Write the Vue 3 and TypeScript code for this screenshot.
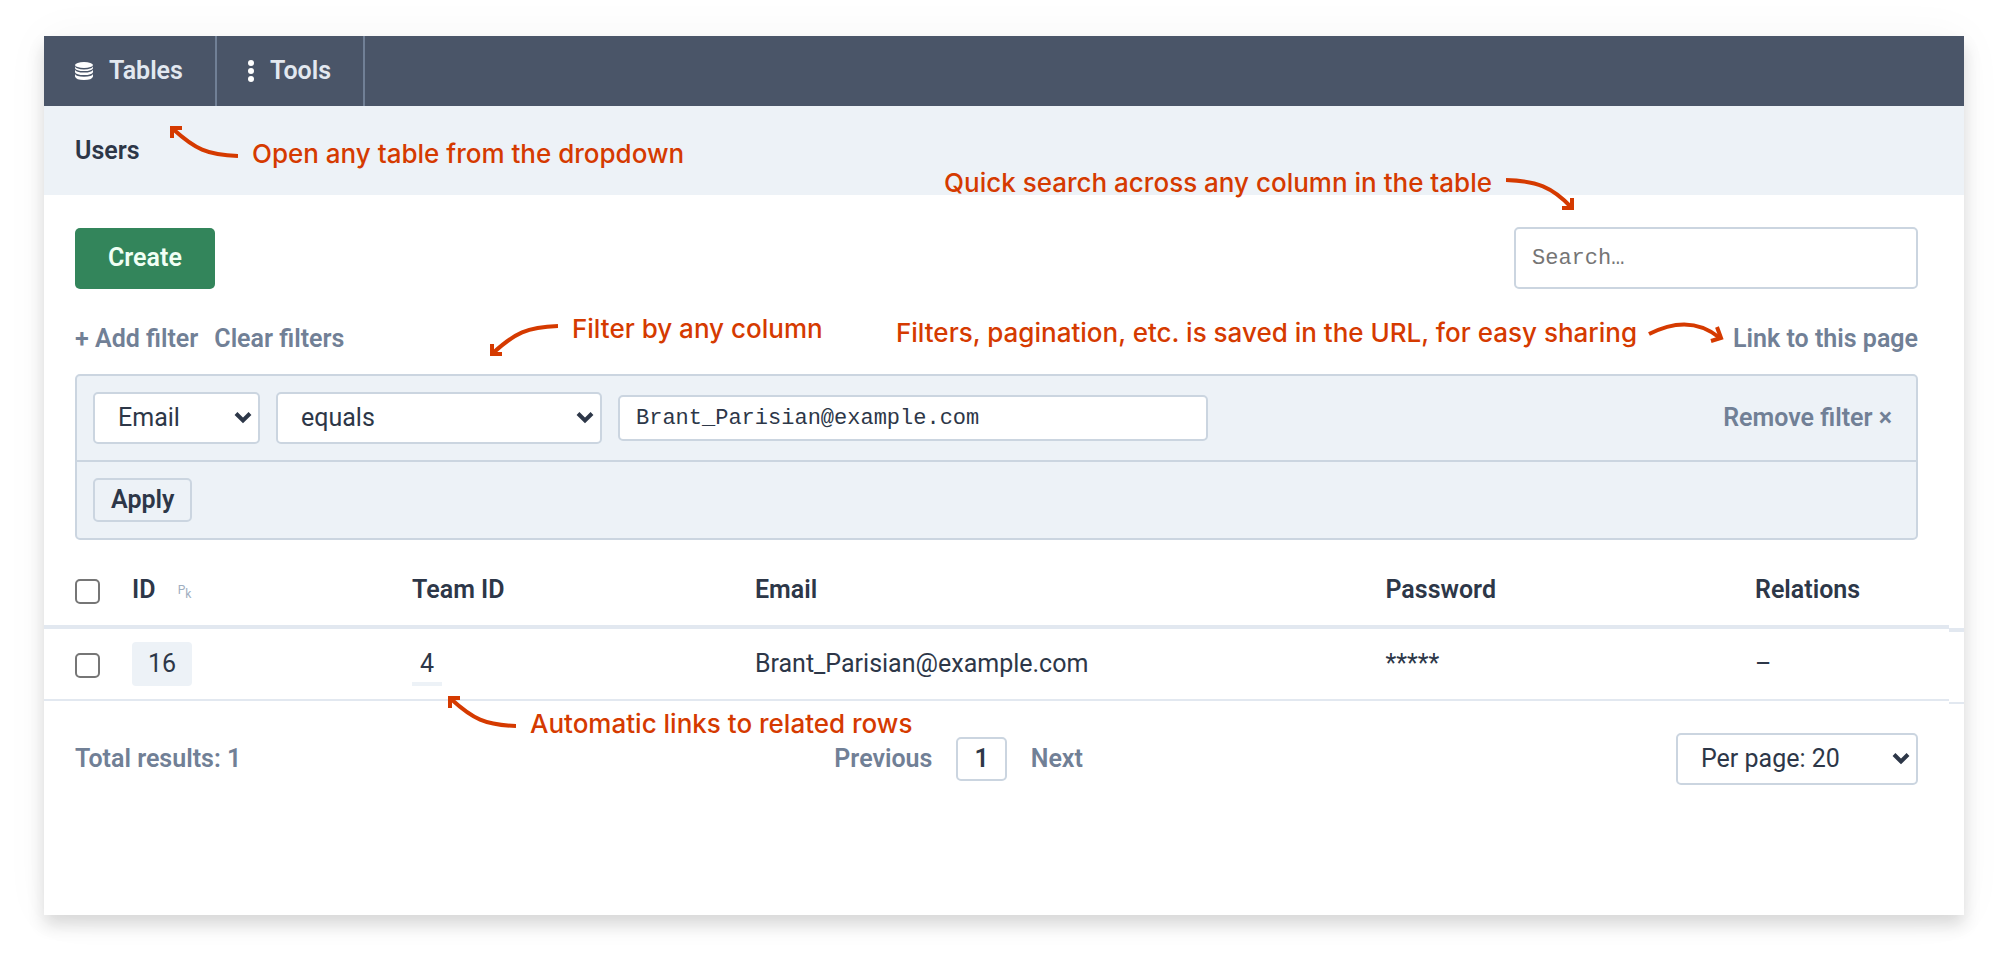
<script setup lang="ts">
import { ref } from 'vue'

interface UserRow {
  id: number
  teamId: number
  email: string
  password: string
  relations: string
}

const column = ref('Email')
const operator = ref('equals')
const filterValue = ref('Brant_Parisian@example.com')
const search = ref('')
const perPage = ref('20')
const rows: UserRow[] = [
  { id: 16, teamId: 4, email: 'Brant_Parisian@example.com', password: '*****', relations: '–' },
]
</script>

<template>
  <main class="card">
    <nav class="menu">
      <button class="menu-item" type="button">
        <svg class="db" viewBox="0 0 18 18" aria-hidden="true">
          <ellipse cx="9" cy="3" rx="9" ry="3" />
          <path d="M0 4.600Q1 7.400 9 7.400T18 4.600V6.200Q17 9 9 9T0 6.200Z" />
          <path d="M0 7.800Q1 10.600 9 10.600T18 7.800V10.200Q17 13 9 13T0 10.200Z" />
          <path d="M0 12Q1 14.700 9 14.700T18 12V14.500Q17 18 9 18T0 14.500Z" />
        </svg>
        Tables
      </button>
      <button class="menu-item" type="button">
        <svg class="dots" viewBox="0 0 6 22" aria-hidden="true">
          <circle cx="3" cy="3" r="3" />
          <circle cx="3" cy="11" r="3" />
          <circle cx="3" cy="19" r="3" />
        </svg>
        Tools
      </button>
    </nav>

    <header class="title"><h1>Users</h1></header>

    <section class="content">
      <div class="bar">
        <button class="create" type="button">Create</button>
        <input v-model="search" class="field search" type="text" placeholder="Search…" aria-label="Search" />
      </div>

      <div class="bar links">
        <div class="link-group">
          <a href="#add">+ Add filter</a>
          <a href="#clear">Clear filters</a>
        </div>
        <a href="#link">Link to this page</a>
      </div>

      <form class="filters" @submit.prevent>
        <div class="filter-row">
          <span class="select column">
            <select v-model="column" aria-label="Column">
              <option>Email</option>
              <option>ID</option>
              <option>Team ID</option>
            </select>
            <svg viewBox="0 0 18 13" aria-hidden="true"><path d="M2 2.500L9 9.500L16 2.500" /></svg>
          </span>
          <span class="select operator">
            <select v-model="operator" aria-label="Operator">
              <option>equals</option>
              <option>contains</option>
            </select>
            <svg viewBox="0 0 18 13" aria-hidden="true"><path d="M2 2.500L9 9.500L16 2.500" /></svg>
          </span>
          <input v-model="filterValue" class="field value" type="text" aria-label="Filter value" />
          <a class="remove" href="#remove">Remove filter ×</a>
        </div>
        <div class="filter-row">
          <button class="apply" type="submit">Apply</button>
        </div>
      </form>
    </section>

    <section class="listing">
      <table>
        <colgroup>
          <col class="c-check" /><col class="c-id" /><col class="c-team" />
          <col class="c-email" /><col class="c-pass" /><col />
        </colgroup>
        <thead>
          <tr>
            <th class="check"><input type="checkbox" aria-label="Select all rows" /></th>
            <th>ID <span class="pk"><span class="pk-p">P</span>k</span></th>
            <th>Team ID</th>
            <th>Email</th>
            <th>Password</th>
            <th>Relations</th>
          </tr>
        </thead>
        <tbody>
          <tr v-for="row in rows" :key="row.id">
            <td class="check"><input type="checkbox" :aria-label="`Select row ${row.id}`" /></td>
            <td><a class="id" href="#row">{{ row.id }}</a></td>
            <td><a class="team" href="#team">{{ row.teamId }}</a></td>
            <td>{{ row.email }}</td>
            <td>{{ row.password }}</td>
            <td>{{ row.relations }}</td>
          </tr>
        </tbody>
      </table>
    </section>

    <footer class="footer">
      <span>Total results: 1</span>
      <div class="pages">
        <a href="#previous">Previous</a>
        <a class="current" href="#1">1</a>
        <a href="#next">Next</a>
      </div>
      <span class="select per-page">
        <select v-model="perPage" aria-label="Results per page">
          <option value="20">Per page: 20</option>
          <option value="50">Per page: 50</option>
        </select>
        <svg viewBox="0 0 18 13" aria-hidden="true"><path d="M2 2.500L9 9.500L16 2.500" /></svg>
      </span>
    </footer>

    <p class="note low open">
      <svg class="hook" viewBox="0 0 68 34" aria-hidden="true">
        <path d="M68 30C37 29 25 23 3 3" /><path d="M2 12V2H12" />
      </svg>
      Open any table from the dropdown
    </p>
    <p class="note quick">
      Quick search across any column in the table
      <svg class="hook" viewBox="0 0 68 34" aria-hidden="true">
        <path d="M0 3C31 4 46 10 65 30" /><path d="M66 21V31H56" />
      </svg>
    </p>
    <p class="note any">
      <svg class="hook" viewBox="0 0 68 34" aria-hidden="true">
        <path d="M68 3C37 4 25 10 3 30" /><path d="M2 21V31H12" />
      </svg>
      Filter by any column
    </p>
    <p class="note share">
      Filters, pagination, etc. is saved in the URL, for easy sharing
      <svg class="wave" viewBox="0 0 76 22" aria-hidden="true">
        <path d="M1 12Q42 -9 72 16" /><path d="M69 5L73 16L63 19" />
      </svg>
    </p>
    <p class="note low related">
      <svg class="hook" viewBox="0 0 68 34" aria-hidden="true">
        <path d="M68 30C37 29 25 23 3 3" /><path d="M2 12V2H12" />
      </svg>
      Automatic links to related rows
    </p>
  </main>
</template>

<style>
body {
  margin: 0;
  background: #fff;
}
</style>

<style scoped>
*, *::after {
  box-sizing: border-box;
}
.card {
  position: relative;
  margin: 36px 44px 54px;
  padding-bottom: 130px;
  background: #fff;
  box-shadow: 0 0 44px rgba(0, 0, 0, 0.04), 0 10px 16px rgba(0, 0, 0, 0.14);
  color: #2d3748;
  font: 400 25px/32px Roboto, sans-serif;
}
button, select {
  font: inherit;
  color: inherit;
}
a {
  color: inherit;
  text-decoration: none;
}
.menu {
  display: flex;
  height: 70px;
  background: #4a5568;
}
.menu-item {
  display: flex;
  align-items: center;
  padding: 0 32px 0 31px;
  border: 0;
  border-right: 2px solid #718096;
  background: none;
  color: #e2e8f0;
  font-weight: 600;
}
.menu-item svg {
  fill: #fff;
}
.db {
  width: 18px;
  height: 18px;
  margin-right: 16px;
}
.dots {
  width: 6px;
  height: 22px;
  margin-right: 16px;
}
.title {
  display: flex;
  align-items: center;
  height: 89px;
  padding: 0 31px;
  background: #edf2f7;
}
h1 {
  margin: 0;
  font: inherit;
  font-weight: 600;
}
.content {
  padding: 32px 46px 0 31px;
}
.bar {
  display: flex;
  align-items: center;
  justify-content: space-between;
}
.create {
  height: 61px;
  padding: 0 33px;
  border: 0;
  border-radius: 5px;
  background: #33855b;
  color: #f0fff4;
  font-weight: 600;
}
.field {
  height: 46px;
  padding: 0 16px;
  border: 2px solid #cbd5e0;
  border-radius: 5px;
  background: #fff;
  color: #2d3748;
  font: 400 22px "Liberation Mono", monospace;
}
.field::placeholder {
  color: #757575;
}
.search {
  width: 404px;
  height: 62px;
}
.links {
  margin: 34px 0 19px;
  color: #718096;
  font-weight: 600;
}
.link-group {
  display: flex;
  gap: 16px;
}
.filters {
  border: 2px solid #cbd5e0;
  border-radius: 5px;
  background: #edf2f7;
}
.filter-row {
  display: flex;
  align-items: center;
  gap: 16px;
  padding: 16px;
}
.filter-row + .filter-row {
  border-top: 2px solid #cbd5e0;
}
.select {
  position: relative;
  display: block;
}
.select select {
  display: block;
  appearance: none;
  width: 100%;
  height: 52px;
  padding: 0 23px;
  border: 2px solid #cbd5e0;
  border-radius: 5px;
  background: #fff;
}
.select svg {
  position: absolute;
  top: 19px;
  right: 8px;
  width: 18px;
  height: 13px;
  fill: none;
  stroke: #2d3748;
  stroke-width: 4;
  pointer-events: none;
}
.column {
  width: 167px;
}
.operator {
  width: 326px;
}
.value {
  width: 590px;
}
.remove {
  margin-left: auto;
  padding-right: 8px;
  color: #718096;
  font-weight: 600;
}
.apply {
  height: 44px;
  padding: 0 16px;
  border: 2px solid #cbd5e0;
  border-radius: 5px;
  background: none;
  font-weight: 600;
}
.listing {
  position: relative;
  padding: 14px 15px 0 0;
}
/* Gutter beside the table that carries its rules to the card's edge */
.listing::after {
  content: '';
  position: absolute;
  right: 0;
  bottom: -3px;
  width: 15px;
  height: 76px;
  border-top: 4px solid #e2e8f0;
  border-bottom: 2px solid #e2e8f0;
}
table {
  width: 100%;
  table-layout: fixed;
  border-collapse: collapse;
}
.c-check { width: 88px; }
.c-id { width: 14.7%; }
.c-team { width: 18%; }
.c-email { width: 33.1%; }
.c-pass { width: 19.4%; }
th, td {
  padding: 0;
  text-align: left;
  vertical-align: middle;
}
th {
  height: 73px;
  border-bottom: 4px solid #e2e8f0;
  font-weight: 600;
}
td {
  height: 73px;
  border-bottom: 2px solid #e2e8f0;
}
.check {
  padding-left: 31px;
}
input[type='checkbox'] {
  appearance: none;
  display: block;
  width: 25px;
  height: 25px;
  margin: 3px 0 0;
  border: 2px solid #767676;
  border-radius: 5px;
  background: #fff;
}
.pk {
  margin-left: 16px;
  color: #a0aec0;
  font-size: 12px;
  font-weight: 400;
  line-height: 12px;
}
.pk-p {
  vertical-align: 4px;
}
.id {
  display: inline-block;
  padding: 6px 16px;
  border-radius: 4px;
  background: #edf2f7;
}
.team {
  display: inline-block;
  padding: 6px 8px 2px;
  border-bottom: 4px solid #edf2f7;
}
.footer {
  display: flex;
  align-items: center;
  justify-content: space-between;
  padding: 32px 46px 0 31px;
  color: #718096;
  font-weight: 600;
}
.pages {
  display: flex;
  align-items: center;
  gap: 24px;
}
.current {
  padding: 4px 16px;
  border: 2px solid #cbd5e0;
  border-radius: 5px;
  color: #2d3748;
}
.per-page {
  width: 242px;
  color: #2d3748;
  font-weight: 400;
}
.note {
  position: absolute;
  display: flex;
  align-items: flex-start;
  gap: 14px;
  margin: 0;
  color: #d53a00;
  font: 500 26px/12px Inter, sans-serif;
  white-space: nowrap;
}
.low {
  align-items: flex-end;
}
.note svg {
  flex: none;
  fill: none;
  stroke: #d53a00;
  stroke-width: 4;
}
.hook {
  width: 68px;
  height: 34px;
}
.wave {
  width: 76px;
  height: 22px;
}
.open { top: 90px; left: 126px; }
.quick { top: 141px; right: 390px; }
.any { top: 287px; left: 446px; }
.share { top: 286px; right: 240px; align-items: center; gap: 11px; }
.related { top: 660px; left: 404px; }
</style>
